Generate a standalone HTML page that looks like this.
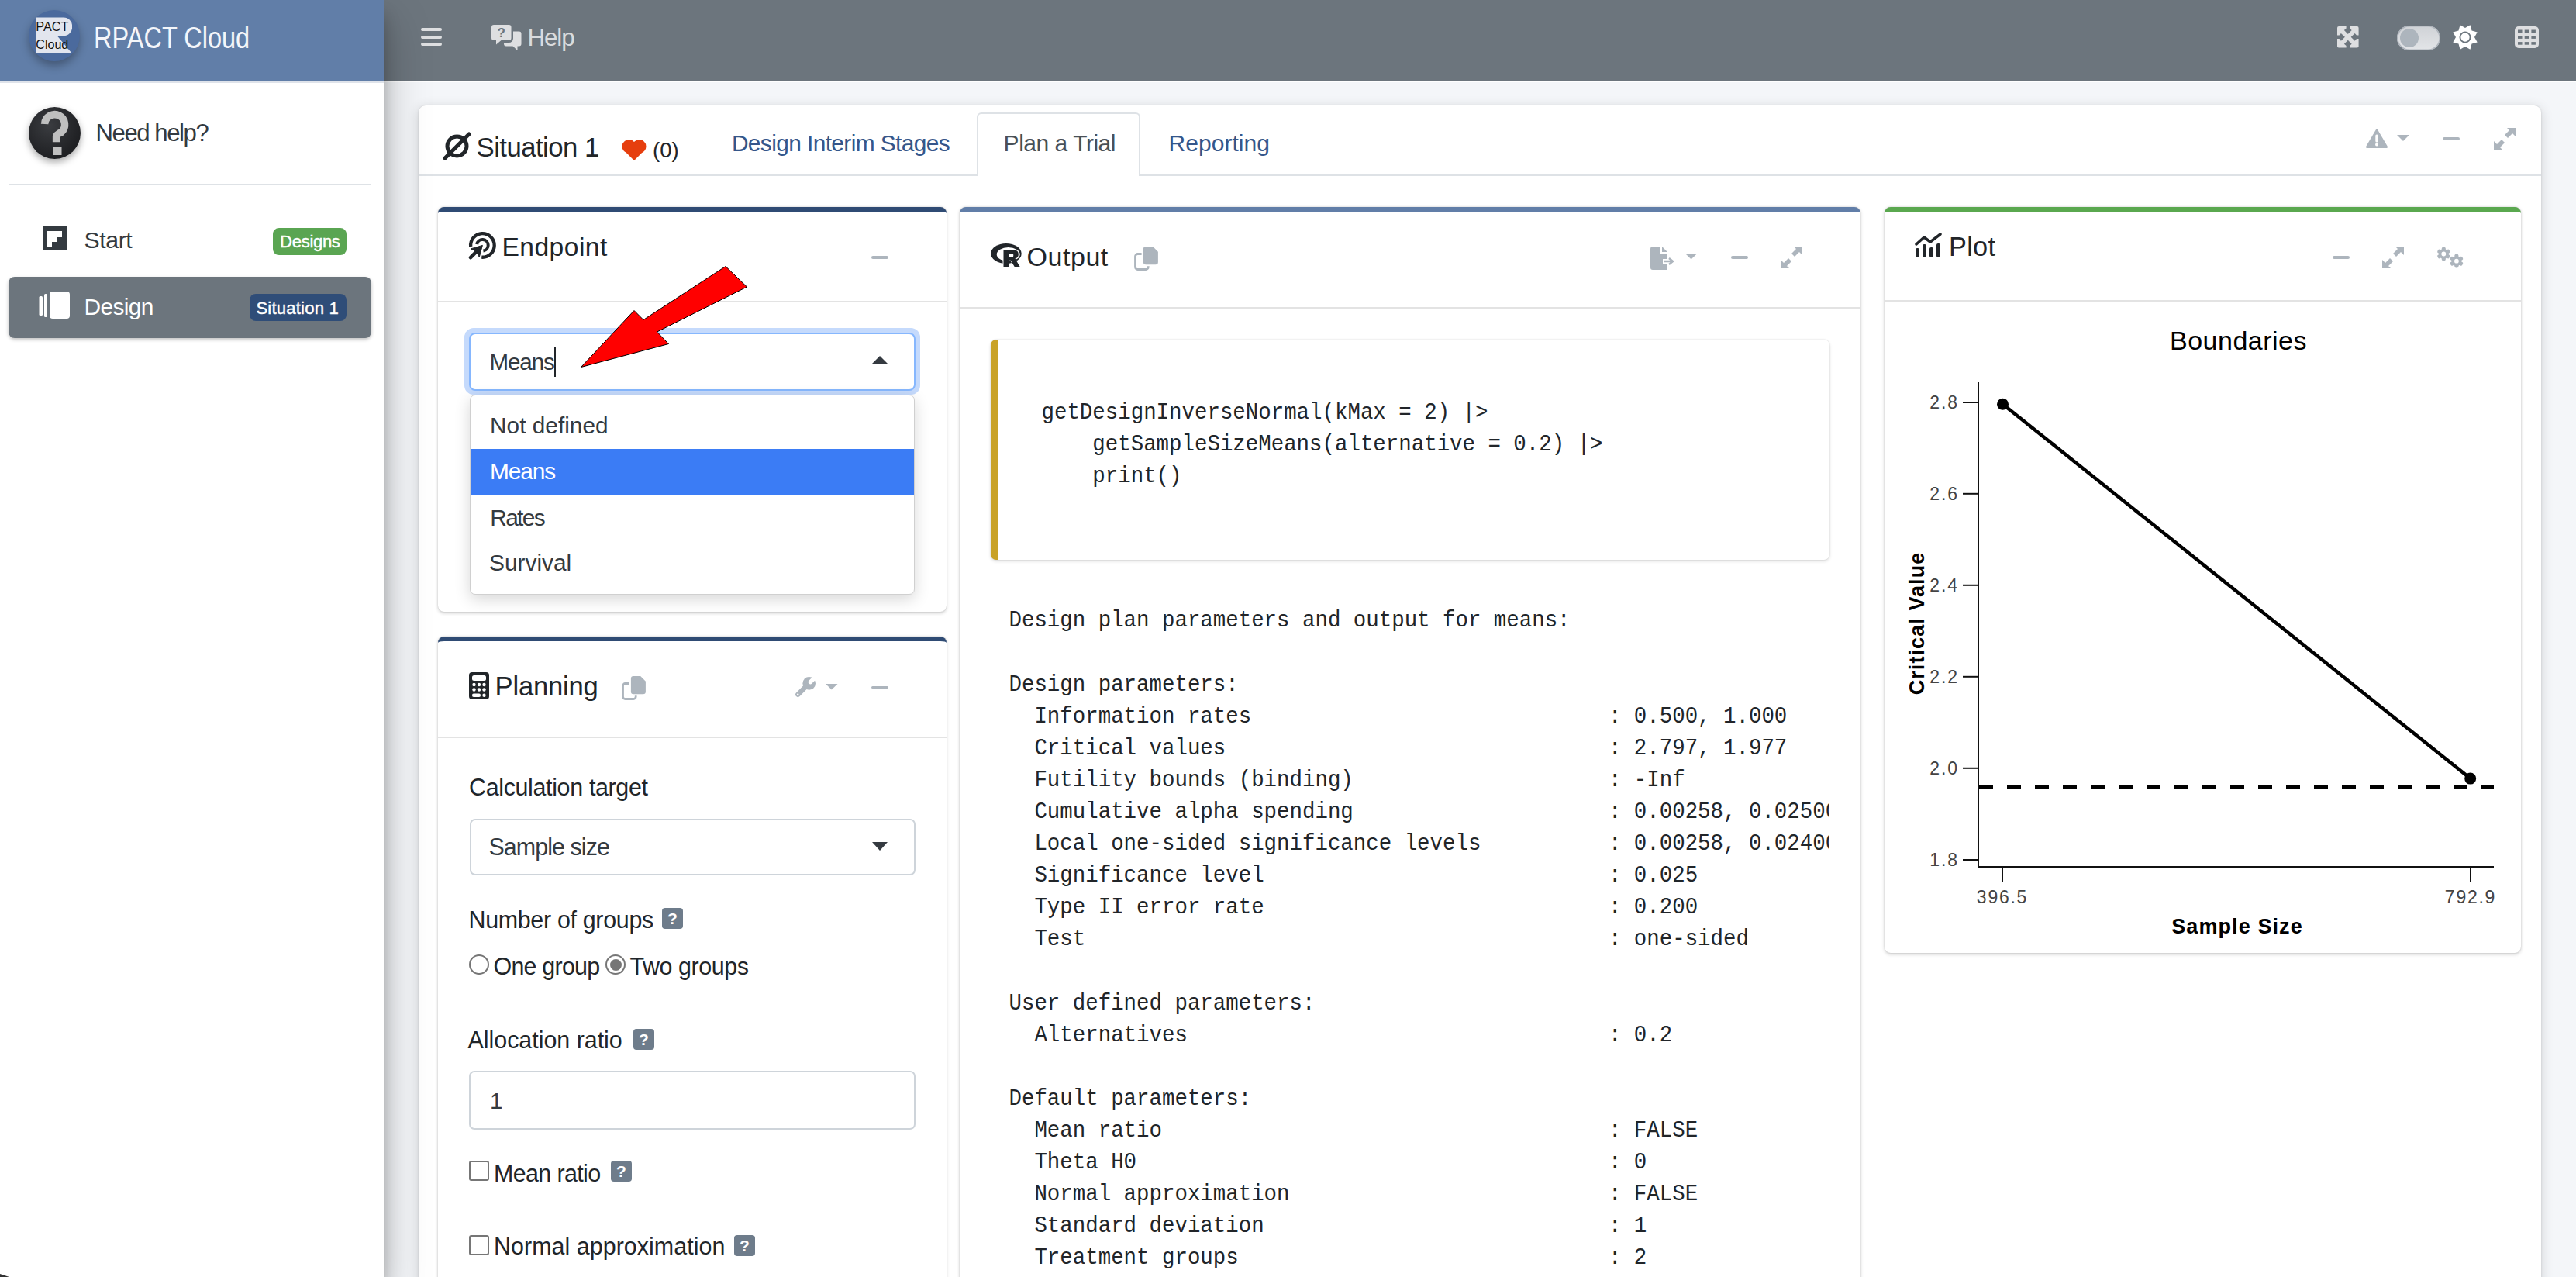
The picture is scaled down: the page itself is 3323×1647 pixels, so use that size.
<!DOCTYPE html>
<html><head><meta charset="utf-8"><style>
html,body{margin:0;padding:0;}
body{width:3323px;height:1647px;overflow:hidden;position:relative;background:#f4f6f9;font-family:'Liberation Sans', sans-serif;}
</style></head><body>
<div style="position:absolute;left:495px;top:0px;width:2828px;height:104px;background:#6c757d;"></div>
<div style="position:absolute;left:495px;top:104px;width:2828px;height:2px;background:#ffffff;"></div>
<div style="position:absolute;left:543px;top:36px;width:27px;height:4px;background:#dedfe1;border-radius:2px;"></div>
<div style="position:absolute;left:543px;top:46px;width:27px;height:4px;background:#dedfe1;border-radius:2px;"></div>
<div style="position:absolute;left:543px;top:55px;width:27px;height:4px;background:#dedfe1;border-radius:2px;"></div>
<svg style="position:absolute;left:634px;top:31px;" width="40" height="33" viewBox="0 0 40 33"><path d="M3 1h19.5a3 3 0 0 1 3 3v14a3 3 0 0 1-3 3H12.5l-6.5 5.5v-5.5H3a3 3 0 0 1-3-3V4a3 3 0 0 1 3-3z" fill="#dedfe1"/>
<path d="M28 9.5h7.5a3 3 0 0 1 3 3v13a3 3 0 0 1-3 3h-2v5.5l-6-5.5h-8.5a3 3 0 0 1-3-3v-1.5h6.5a5.5 5.5 0 0 0 5.5-5.5z" fill="#dedfe1"/>
<text x="12.7" y="17.2" font-family="Liberation Sans" font-weight="700" font-size="17" fill="#6c757d" text-anchor="middle">?</text></svg>
<div style="position:absolute;left:680.5px;top:32.8px;font-family:'Liberation Sans', sans-serif;font-size:31.30px;line-height:1;font-weight:400;letter-spacing:-1.07px;color:#d9dbde;white-space:pre;">Help</div>
<svg style="position:absolute;left:3015px;top:34px;" width="28" height="28" viewBox="0 0 28 28"><rect x="0" y="0" width="27.6" height="27.6" rx="2" fill="#dedfe1"/><polygon points="11.60,-1.00 11.60,2.60 8.90,4.90 13.80,9.90 18.70,4.90 16.00,2.60 16.00,-1.00" fill="#6c757d"/><polygon points="11.60,28.60 11.60,25.00 8.90,22.70 13.80,17.70 18.70,22.70 16.00,25.00 16.00,28.60" fill="#6c757d"/><polygon points="-1.00,11.60 2.60,11.60 4.90,8.90 9.90,13.80 4.90,18.70 2.60,16.00 -1.00,16.00" fill="#6c757d"/><polygon points="28.60,11.60 25.00,11.60 22.70,8.90 17.70,13.80 22.70,18.70 25.00,16.00 28.60,16.00" fill="#6c757d"/></svg>
<div style="position:absolute;left:3092px;top:33px;width:56px;height:32px;background:linear-gradient(#cfd2d6,#e3e5e8);border-radius:16px;box-shadow:inset 0 0 0 1.5px #aeb4bc;"></div>
<div style="position:absolute;left:3096px;top:37px;width:24px;height:24px;background:#adb5bd;border-radius:50%;"></div>
<svg style="position:absolute;left:3161.7px;top:29.6px;" width="36" height="36" viewBox="0 0 36 36"><polygon points="24.51,2.29 26.49,9.51 33.71,11.49 30.00,18.00 33.71,24.51 26.49,26.49 24.51,33.71 18.00,30.00 11.49,33.71 9.51,26.49 2.29,24.51 6.00,18.00 2.29,11.49 9.51,9.51 11.49,2.29 18.00,6.00" fill="#ffffff"/><circle cx="18" cy="18" r="6.6" fill="none" stroke="#6c757d" stroke-width="1.9"/></svg>
<svg style="position:absolute;left:3244px;top:34px;" width="31" height="28" viewBox="0 0 31 28"><rect x="0" y="0" width="31" height="28" rx="5" fill="#dedfe1"/><rect x="4.0" y="4.5" width="5.5" height="3.6" fill="#6c757d"/><rect x="12.7" y="4.5" width="5.5" height="3.6" fill="#6c757d"/><rect x="21.4" y="4.5" width="5.5" height="3.6" fill="#6c757d"/><rect x="4.0" y="12.3" width="5.5" height="3.6" fill="#6c757d"/><rect x="12.7" y="12.3" width="5.5" height="3.6" fill="#6c757d"/><rect x="21.4" y="12.3" width="5.5" height="3.6" fill="#6c757d"/><rect x="4.0" y="20.1" width="5.5" height="3.6" fill="#6c757d"/><rect x="12.7" y="20.1" width="5.5" height="3.6" fill="#6c757d"/><rect x="21.4" y="20.1" width="5.5" height="3.6" fill="#6c757d"/></svg>
<div style="position:absolute;left:0;top:0;width:495px;height:1647px;background:#fff;box-shadow:0 28px 56px rgba(0,0,0,.25),0 20px 20px rgba(0,0,0,.22);z-index:1"></div>
<div style="position:absolute;left:0;top:0;width:495px;height:1647px;z-index:2">
<div style="position:absolute;left:0px;top:0px;width:495px;height:105px;background:#617ea8;"></div>
<div style="position:absolute;left:0px;top:105px;width:495px;height:2px;background:#dfe3ea;"></div>
<div style="position:absolute;left:37px;top:13px;width:66px;height:66px;border-radius:50%;background:#4b6a9d;box-shadow:0 6px 12px rgba(0,0,0,.3)"></div>
<svg style="position:absolute;left:46px;top:22px;" width="47" height="47" viewBox="0 0 47 47"><path d="M0.6 0.6h35.5a11 11 0 0 1 11 11v1.5a11 11 0 0 1-11 11h-8.5l19.3 22.9H0.6z" fill="#e2e5ee"/>
<text x="0.3" y="17.9" font-family="Liberation Sans" font-size="16.4" fill="#111" textLength="42" lengthAdjust="spacingAndGlyphs">PACT</text>
<text x="0.3" y="40.9" font-family="Liberation Sans" font-size="16.4" fill="#111" textLength="42" lengthAdjust="spacingAndGlyphs">Cloud</text></svg>
<div style="position:absolute;left:121.0px;top:28.9px;font-family:'Liberation Sans', sans-serif;font-size:39.70px;line-height:1;font-weight:400;letter-spacing:0.00px;color:#f4f6fa;white-space:pre;transform:scaleX(0.819);transform-origin:0 0;">RPACT Cloud</div>
<div style="position:absolute;left:37px;top:138px;width:67px;height:67px;border-radius:50%;background:radial-gradient(circle at 40% 35%,#3a3c40,#1f2023 70%);box-shadow:0 4px 10px rgba(0,0,0,.35)"></div>
<svg style="position:absolute;left:37px;top:138px;" width="67" height="67" viewBox="0 0 67 67"><path d="M20.6 22 A13 13 0 1 1 42 32.6 Q35.6 35.5 35.6 38.5 V45.2" fill="none" stroke="#bfbfbf" stroke-width="9.5"/>
<rect x="32" y="51.5" width="10.5" height="10.5" fill="#bfbfbf"/></svg>
<div style="position:absolute;left:123.5px;top:155.5px;font-family:'Liberation Sans', sans-serif;font-size:31.16px;line-height:1;font-weight:400;letter-spacing:-1.46px;color:#343a40;white-space:pre;">Need help?</div>
<div style="position:absolute;left:11px;top:237px;width:468px;height:2px;background:#dee2e6;"></div>
<svg style="position:absolute;left:55px;top:292px;" width="31" height="31" viewBox="0 0 31 31"><path d="M0 0h31v31H0z" fill="#343a40"/><path d="M6 6h19v8h-7v6h-6v6H6z" fill="#fff"/></svg>
<div style="position:absolute;left:108.5px;top:295.3px;font-family:'Liberation Sans', sans-serif;font-size:30.29px;line-height:1;font-weight:400;letter-spacing:-0.43px;color:#343a40;white-space:pre;">Start</div>
<div style="position:absolute;left:352px;top:294px;width:95px;height:35px;background:#5aa552;border-radius:8px;"></div>
<div style="position:absolute;left:361.1px;top:301.1px;font-family:'Liberation Sans', sans-serif;font-size:22.17px;line-height:1;font-weight:400;letter-spacing:-0.37px;color:#fff;white-space:pre;-webkit-text-stroke:0.4px #fff;">Designs</div>
<div style="position:absolute;left:11px;top:357px;width:468px;height:79px;background:#6c757d;border-radius:8px;box-shadow:0 2px 4px rgba(0,0,0,.25);"></div>
<svg style="position:absolute;left:50px;top:376px;" width="41" height="36" viewBox="0 0 41 36"><rect x="0.5" y="6" width="4.5" height="25" rx="1.5" fill="#fff"/><rect x="7" y="3" width="4" height="30" rx="1.5" fill="#fff"/><rect x="14" y="0" width="26" height="35" rx="4" fill="#fff"/></svg>
<div style="position:absolute;left:108.5px;top:381.2px;font-family:'Liberation Sans', sans-serif;font-size:29.86px;line-height:1;font-weight:400;letter-spacing:-0.64px;color:#fff;white-space:pre;">Design</div>
<div style="position:absolute;left:322px;top:379px;width:125px;height:35px;background:#2f4d78;border-radius:8px;"></div>
<div style="position:absolute;left:330.4px;top:386.8px;font-family:'Liberation Sans', sans-serif;font-size:22.17px;line-height:1;font-weight:400;letter-spacing:0.17px;color:#fff;white-space:pre;-webkit-text-stroke:0.4px #fff;">Situation 1</div>
</div>
<div style="position:absolute;left:540px;top:136px;width:2738px;height:1600px;background:#fff;border-radius:9px;box-shadow:0 0 2px rgba(0,0,0,.15),0 3px 16px rgba(0,0,0,.16)"></div>
<div style="position:absolute;left:540px;top:225px;width:2738px;height:2px;background:#dee2e6;"></div>
<svg style="position:absolute;left:571px;top:170px;" width="37" height="37" viewBox="0 0 37 37"><circle cx="18.5" cy="18.5" r="12.5" fill="none" stroke="#212529" stroke-width="5"/><line x1="3" y1="34" x2="34" y2="3" stroke="#212529" stroke-width="5" stroke-linecap="round"/></svg>
<div style="position:absolute;left:614.5px;top:172.6px;font-family:'Liberation Sans', sans-serif;font-size:34.78px;line-height:1;font-weight:400;letter-spacing:-0.55px;color:#212529;white-space:pre;">Situation 1</div>
<svg style="position:absolute;left:802px;top:179px;" width="32" height="28" viewBox="0 0 32 28"><path d="M16 28 L3 15 A8 8 0 0 1 16 4 A8 8 0 0 1 29 15 Z" fill="#e63e0e"/><circle cx="9" cy="10" r="8.5" fill="#e63e0e"/><circle cx="23" cy="10" r="8.5" fill="#e63e0e"/></svg>
<div style="position:absolute;left:842.0px;top:179.6px;font-family:'Liberation Sans', sans-serif;font-size:27.50px;line-height:1;font-weight:400;letter-spacing:0.00px;color:#212529;white-space:pre;">(0)</div>
<div style="position:absolute;left:1260px;top:145px;width:211px;height:82px;background:#fff;border:2px solid #dee2e6;border-bottom:none;border-radius:6px 6px 0 0;box-sizing:border-box"></div>
<div style="position:absolute;left:943.9px;top:170.4px;font-family:'Liberation Sans', sans-serif;font-size:29.86px;line-height:1;font-weight:400;letter-spacing:-0.60px;color:#35568a;white-space:pre;">Design Interim Stages</div>
<div style="position:absolute;left:1294.6px;top:170.2px;font-family:'Liberation Sans', sans-serif;font-size:30.00px;line-height:1;font-weight:400;letter-spacing:-0.47px;color:#495057;white-space:pre;">Plan a Trial</div>
<div style="position:absolute;left:1507.5px;top:170.2px;font-family:'Liberation Sans', sans-serif;font-size:30.00px;line-height:1;font-weight:400;letter-spacing:0.05px;color:#35568a;white-space:pre;">Reporting</div>
<svg style="position:absolute;left:3052px;top:166px;" width="28" height="25" viewBox="0 0 28 25"><path d="M14 1 L27 23 Q27.5 24.5 26 24.5 L2 24.5 Q0.5 24.5 1 23 Z" fill="#adb5bd" stroke="#adb5bd" stroke-width="1.5" stroke-linejoin="round"/><rect x="12.3" y="7.5" width="3.4" height="10" rx="1.5" fill="#fff"/><circle cx="14" cy="20.5" r="2" fill="#fff"/></svg>
<svg style="position:absolute;left:3092px;top:174px;" width="16" height="8" viewBox="0 0 16 8"><path d="M0 0h16L8 8z" fill="#adb5bd"/></svg>
<div style="position:absolute;left:3151px;top:176.5px;width:22px;height:4px;background:#adb5bd;border-radius:2px;"></div>
<svg style="position:absolute;left:3217px;top:165px;" width="28" height="28" viewBox="0 0 28 28"><path d="M17 0h11v11l-4-4-6 6-4-4 6-6z M11 28H0V17l4 4 6-6 4 4-6 6z" fill="#adb5bd"/></svg>
<div style="position:absolute;left:565px;top:267px;width:656px;height:522px;background:#fff;border-radius:8px;border-top:6px solid #2f4b74;box-sizing:border-box;box-shadow:0 0 1.5px rgba(0,0,0,.2),0 1.5px 4px rgba(0,0,0,.18)"></div>
<div style="position:absolute;left:565px;top:821px;width:656px;height:900px;background:#fff;border-radius:8px;border-top:6px solid #2f4b74;box-sizing:border-box;box-shadow:0 0 1.5px rgba(0,0,0,.2),0 1.5px 4px rgba(0,0,0,.18)"></div>
<div style="position:absolute;left:1238px;top:267px;width:1162px;height:1500px;background:#fff;border-radius:8px;border-top:6px solid #617ea8;box-sizing:border-box;box-shadow:0 0 1.5px rgba(0,0,0,.2),0 1.5px 4px rgba(0,0,0,.18)"></div>
<div style="position:absolute;left:2431px;top:267px;width:821px;height:962px;background:#fff;border-radius:8px;border-top:6px solid #5aa84f;box-sizing:border-box;box-shadow:0 0 1.5px rgba(0,0,0,.2),0 1.5px 4px rgba(0,0,0,.18)"></div>
<div style="position:absolute;left:565px;top:388px;width:656px;height:2px;background:#e3e3e3;"></div>
<div style="position:absolute;left:565px;top:950px;width:656px;height:2px;background:#e3e3e3;"></div>
<div style="position:absolute;left:1238px;top:396px;width:1162px;height:2px;background:#e3e3e3;"></div>
<div style="position:absolute;left:2431px;top:387px;width:821px;height:2px;background:#e3e3e3;"></div>
<svg style="position:absolute;left:598px;top:292px;" width="50" height="48" viewBox="0 0 50 48"><path d="M9.2 26 A15.3 15.3 0 1 1 23.3 39.7" fill="none" stroke="#212529" stroke-width="4.3"/>
<path d="M17.2 23.1 A7.3 7.3 0 1 1 25.4 31.6" fill="none" stroke="#212529" stroke-width="4"/>
<path d="M9 40.2 L17.5 31.7" stroke="#212529" stroke-width="4.6" stroke-linecap="round"/>
<path d="M24.4 24.4 L9.4 28.9 L14.5 31.5 L17.5 34.5 L20.3 39.5 Z" fill="#212529" stroke="#212529" stroke-width="1" stroke-linejoin="round"/></svg>
<div style="position:absolute;left:647.5px;top:301.6px;font-family:'Liberation Sans', sans-serif;font-size:33.62px;line-height:1;font-weight:400;letter-spacing:0.44px;color:#212529;white-space:pre;">Endpoint</div>
<div style="position:absolute;left:1124px;top:330px;width:22px;height:3.5px;background:#adb5bd;border-radius:2px;"></div>
<div style="position:absolute;left:599px;top:423px;width:588px;height:86px;border-radius:12px;background:#c5dafc"></div>
<div style="position:absolute;left:605px;top:429px;width:576px;height:75px;border-radius:8px;background:#fff;border:2px solid #86b7fe;box-sizing:border-box"></div>
<div style="position:absolute;left:631.5px;top:451.9px;font-family:'Liberation Sans', sans-serif;font-size:29.57px;line-height:1;font-weight:400;letter-spacing:-1.12px;color:#343a40;white-space:pre;">Means</div>
<div style="position:absolute;left:715px;top:447px;width:2px;height:39px;background:#212529;"></div>
<svg style="position:absolute;left:1125px;top:459px;" width="20" height="10" viewBox="0 0 20 10"><path d="M0 10h20L10 0z" fill="#343a40"/></svg>
<div style="position:absolute;left:606px;top:508.5px;width:574px;height:258.5px;background:#fff;border:1.5px solid #d0d0d0;border-radius:7px;box-sizing:border-box;box-shadow:0 6px 20px rgba(0,0,0,.16)"></div>
<div style="position:absolute;left:607px;top:579px;width:572px;height:59px;background:#3b7cf5;"></div>
<div style="position:absolute;left:632.1px;top:534.3px;font-family:'Liberation Sans', sans-serif;font-size:29.71px;line-height:1;font-weight:400;letter-spacing:0.05px;color:#343a40;white-space:pre;">Not defined</div>
<div style="position:absolute;left:632.0px;top:593.3px;font-family:'Liberation Sans', sans-serif;font-size:29.86px;line-height:1;font-weight:400;letter-spacing:-1.12px;color:#ffffff;white-space:pre;">Means</div>
<div style="position:absolute;left:632.2px;top:652.5px;font-family:'Liberation Sans', sans-serif;font-size:29.86px;line-height:1;font-weight:400;letter-spacing:-1.62px;color:#343a40;white-space:pre;">Rates</div>
<div style="position:absolute;left:631.0px;top:711.2px;font-family:'Liberation Sans', sans-serif;font-size:29.86px;line-height:1;font-weight:400;letter-spacing:0.00px;color:#343a40;white-space:pre;">Survival</div>
<svg style="position:absolute;left:605px;top:867px;" width="27" height="36" viewBox="0 0 27 36"><rect x="0" y="0" width="26" height="35" rx="4" fill="#212529"/><rect x="4" y="4" width="18" height="7" rx="2.5" fill="#fff"/><circle cx="6.5" cy="16.0" r="2.2" fill="#fff"/><circle cx="13.0" cy="16.0" r="2.2" fill="#fff"/><circle cx="19.5" cy="16.0" r="2.2" fill="#fff"/><circle cx="6.5" cy="22.5" r="2.2" fill="#fff"/><circle cx="13.0" cy="22.5" r="2.2" fill="#fff"/><circle cx="19.5" cy="22.5" r="2.2" fill="#fff"/><rect x="4" y="27.5" width="11" height="4.5" rx="2" fill="#fff"/><circle cx="19.5" cy="29.7" r="2.2" fill="#fff"/></svg>
<div style="position:absolute;left:638.5px;top:867.9px;font-family:'Liberation Sans', sans-serif;font-size:34.64px;line-height:1;font-weight:400;letter-spacing:-0.20px;color:#212529;white-space:pre;">Planning</div>
<svg style="position:absolute;left:802px;top:872px;" width="32" height="32" viewBox="0 0 32 32"><path d="M9.6 9.5 H4.5 a3 3 0 0 0 -3 3 V26.5 a3 3 0 0 0 3 3 H15.2 a3 3 0 0 0 3-3 V25.3" fill="none" stroke="#adb5bd" stroke-width="2.8"/><path d="M11.9 3.4 a3.3 3.3 0 0 1 3.3-3.3 H24.2 L30.9 6.8 V19.9 a3.3 3.3 0 0 1 -3.3 3.3 H15.2 a3.3 3.3 0 0 1 -3.3-3.3 Z" fill="#adb5bd"/></svg>
<svg style="position:absolute;left:1015px;top:865px;" width="45" height="40" viewBox="0 0 45 40"><path d="M27 18 L14.3 30.8" stroke="#adb5bd" stroke-width="6.4" stroke-linecap="round"/><circle cx="28.7" cy="16.4" r="8.3" fill="#adb5bd"/><path d="M30.4 14.6 L40 5" stroke="#fff" stroke-width="5.4" stroke-linecap="round"/><circle cx="14.2" cy="30.9" r="1.3" fill="#fff"/></svg>
<svg style="position:absolute;left:1065.2px;top:882.3px;" width="15.5" height="7.5" viewBox="0 0 15.5 7.5"><path d="M0 0h15.5L7.75 7.5z" fill="#adb5bd"/></svg>
<div style="position:absolute;left:1124px;top:884.5px;width:22px;height:3.5px;background:#adb5bd;border-radius:2px;"></div>
<div style="position:absolute;left:605.0px;top:1000.2px;font-family:'Liberation Sans', sans-serif;font-size:30.43px;line-height:1;font-weight:400;letter-spacing:-0.34px;color:#212529;white-space:pre;">Calculation target</div>
<div style="position:absolute;left:606px;top:1056px;width:575px;height:73px;border:2px solid #ced4da;border-radius:7px;box-sizing:border-box"></div>
<div style="position:absolute;left:630.5px;top:1077.1px;font-family:'Liberation Sans', sans-serif;font-size:30.43px;line-height:1;font-weight:400;letter-spacing:-0.93px;color:#343a40;white-space:pre;">Sample size</div>
<svg style="position:absolute;left:1125px;top:1086px;" width="20" height="11" viewBox="0 0 20 11"><path d="M0 0h20L10 11z" fill="#343a40"/></svg>
<div style="position:absolute;left:604.5px;top:1170.6px;font-family:'Liberation Sans', sans-serif;font-size:30.43px;line-height:1;font-weight:400;letter-spacing:-0.32px;color:#212529;white-space:pre;">Number of groups</div>
<div style="position:absolute;left:854px;top:1171px;width:27px;height:27px;background:#6e7c8b;border-radius:4px;"></div>
<div style="position:absolute;left:861.0px;top:1174.2px;font-family:'Liberation Sans', sans-serif;font-size:21.00px;line-height:1;font-weight:700;letter-spacing:0.00px;color:#fff;white-space:pre;">?</div>
<div style="position:absolute;left:605px;top:1231px;width:26px;height:26px;border:2px solid #767676;border-radius:50%;box-sizing:border-box"></div>
<div style="position:absolute;left:636.5px;top:1230.8px;font-family:'Liberation Sans', sans-serif;font-size:30.43px;line-height:1;font-weight:400;letter-spacing:-0.77px;color:#212529;white-space:pre;">One group</div>
<div style="position:absolute;left:781px;top:1231px;width:26px;height:26px;border:2px solid #767676;border-radius:50%;box-sizing:border-box"></div>
<div style="position:absolute;left:786.5px;top:1236.5px;width:15px;height:15px;background:#767676;border-radius:50%"></div>
<div style="position:absolute;left:812.5px;top:1230.8px;font-family:'Liberation Sans', sans-serif;font-size:30.43px;line-height:1;font-weight:400;letter-spacing:-0.42px;color:#212529;white-space:pre;">Two groups</div>
<div style="position:absolute;left:603.5px;top:1326.4px;font-family:'Liberation Sans', sans-serif;font-size:30.43px;line-height:1;font-weight:400;letter-spacing:-0.02px;color:#212529;white-space:pre;">Allocation ratio</div>
<div style="position:absolute;left:817px;top:1327px;width:27px;height:27px;background:#6e7c8b;border-radius:4px;"></div>
<div style="position:absolute;left:824.0px;top:1330.2px;font-family:'Liberation Sans', sans-serif;font-size:21.00px;line-height:1;font-weight:700;letter-spacing:0.00px;color:#fff;white-space:pre;">?</div>
<div style="position:absolute;left:605px;top:1381px;width:576px;height:76px;border:2px solid #ced4da;border-radius:7px;box-sizing:border-box"></div>
<div style="position:absolute;left:632.0px;top:1405.2px;font-family:'Liberation Sans', sans-serif;font-size:29.50px;line-height:1;font-weight:400;letter-spacing:0.00px;color:#343a40;white-space:pre;">1</div>
<div style="position:absolute;left:605px;top:1497px;width:26px;height:26px;border:2px solid #767676;border-radius:3px;box-sizing:border-box"></div>
<div style="position:absolute;left:637.0px;top:1497.9px;font-family:'Liberation Sans', sans-serif;font-size:30.43px;line-height:1;font-weight:400;letter-spacing:-0.62px;color:#212529;white-space:pre;">Mean ratio</div>
<div style="position:absolute;left:788px;top:1497px;width:27px;height:27px;background:#6e7c8b;border-radius:4px;"></div>
<div style="position:absolute;left:795.0px;top:1500.2px;font-family:'Liberation Sans', sans-serif;font-size:21.00px;line-height:1;font-weight:700;letter-spacing:0.00px;color:#fff;white-space:pre;">?</div>
<div style="position:absolute;left:605px;top:1592.5px;width:26px;height:26px;border:2px solid #767676;border-radius:3px;box-sizing:border-box"></div>
<div style="position:absolute;left:637.0px;top:1592.4px;font-family:'Liberation Sans', sans-serif;font-size:30.43px;line-height:1;font-weight:400;letter-spacing:0.04px;color:#212529;white-space:pre;">Normal approximation</div>
<div style="position:absolute;left:947px;top:1593px;width:27px;height:27px;background:#6e7c8b;border-radius:4px;"></div>
<div style="position:absolute;left:954.0px;top:1596.2px;font-family:'Liberation Sans', sans-serif;font-size:21.00px;line-height:1;font-weight:700;letter-spacing:0.00px;color:#fff;white-space:pre;">?</div>
<svg style="position:absolute;left:1272px;top:306px;" width="54" height="46" viewBox="0 0 54 46"><ellipse cx="25.9" cy="21" rx="19.8" ry="13" fill="#212529"/>
<ellipse cx="28.7" cy="22" rx="15" ry="9" fill="#fff"/>
<path fill-rule="evenodd" d="M21.5 15.8 H36.5 Q42.8 15.8 42.8 22 Q42.8 26.8 38.2 28 L44.6 39.2 H36.8 L31.4 30.2 H29.5 V39.2 H21.5 Z M29.5 20.8 H34.2 Q35.8 20.8 35.8 23.2 Q35.8 25.6 34.2 25.6 H29.5 Z" fill="#fff"/>
<path fill-rule="evenodd" d="M22.5 16.8 H36.5 Q41.8 16.8 41.8 22 Q41.8 26.3 37.5 27.4 L44.1 38.7 H37.1 L31.8 29.7 H29 V38.7 H22.5 Z M29 21 H34.2 Q35.3 21 35.3 23.3 Q35.3 25.6 34.2 25.6 H29 Z" fill="#212529"/></svg>
<div style="position:absolute;left:1324.5px;top:314.2px;font-family:'Liberation Sans', sans-serif;font-size:34.06px;line-height:1;font-weight:400;letter-spacing:0.52px;color:#212529;white-space:pre;">Output</div>
<svg style="position:absolute;left:1463px;top:318px;" width="32" height="32" viewBox="0 0 32 32"><path d="M9.6 9.5 H4.5 a3 3 0 0 0 -3 3 V26.5 a3 3 0 0 0 3 3 H15.2 a3 3 0 0 0 3-3 V25.3" fill="none" stroke="#adb5bd" stroke-width="2.8"/><path d="M11.9 3.4 a3.3 3.3 0 0 1 3.3-3.3 H24.2 L30.9 6.8 V19.9 a3.3 3.3 0 0 1 -3.3 3.3 H15.2 a3.3 3.3 0 0 1 -3.3-3.3 Z" fill="#adb5bd"/></svg>
<svg style="position:absolute;left:2129px;top:318px;" width="33" height="30" viewBox="0 0 33 30"><path d="M0 3a3 3 0 0 1 3-3h10v9h9v7h-6v6h6v8H3a3 3 0 0 1-3-3z M15 0l7 7h-7z" fill="#adb5bd"/><path d="M17 19h10M24 15l5 4-5 4" fill="none" stroke="#adb5bd" stroke-width="2.4"/></svg>
<svg style="position:absolute;left:2174.3px;top:327.1px;" width="15.2" height="7.4" viewBox="0 0 15.2 7.4"><path d="M0 0h15.2L7.6 7.4z" fill="#adb5bd"/></svg>
<div style="position:absolute;left:2233px;top:330px;width:22px;height:3.5px;background:#adb5bd;border-radius:2px;"></div>
<svg style="position:absolute;left:2297px;top:318px;" width="28" height="28" viewBox="0 0 28 28"><path d="M17 0h11v11l-4-4-6 6-4-4 6-6z M11 28H0V17l4 4 6-6 4 4-6 6z" fill="#adb5bd"/></svg>
<div style="position:absolute;left:1278px;top:438px;width:1082px;height:284px;background:#fff;border-radius:7px;border-left:10px solid #c9a227;box-sizing:border-box;box-shadow:0 0 2px rgba(0,0,0,.15),0 2px 4px rgba(0,0,0,.12)"></div>
<div style="position:absolute;left:1343.5px;top:519.2px;font-family:'Liberation Mono', monospace;font-size:27.43px;line-height:1;font-weight:400;letter-spacing:0.00px;color:#212529;white-space:pre;transform:scaleY(1.1);transform-origin:0 20.85px;">getDesignInverseNormal(kMax = 2) |&gt;</div>
<div style="position:absolute;left:1343.5px;top:560.0px;font-family:'Liberation Mono', monospace;font-size:27.43px;line-height:1;font-weight:400;letter-spacing:0.00px;color:#212529;white-space:pre;transform:scaleY(1.1);transform-origin:0 20.85px;">    getSampleSizeMeans(alternative = 0.2) |&gt;</div>
<div style="position:absolute;left:1343.5px;top:600.9px;font-family:'Liberation Mono', monospace;font-size:27.43px;line-height:1;font-weight:400;letter-spacing:0.00px;color:#212529;white-space:pre;transform:scaleY(1.1);transform-origin:0 20.85px;">    print()</div>
<div style="position:absolute;left:1278px;top:760px;width:1082px;height:900px;overflow:hidden">
<div style="position:absolute;left:23.5px;top:27.3px;font-family:'Liberation Mono', monospace;font-size:27.43px;line-height:1;color:#212529;white-space:pre;transform:scaleY(1.1);transform-origin:0 20.85px">Design plan parameters and output for means:</div>
<div style="position:absolute;left:23.5px;top:109.5px;font-family:'Liberation Mono', monospace;font-size:27.43px;line-height:1;color:#212529;white-space:pre;transform:scaleY(1.1);transform-origin:0 20.85px">Design parameters:</div>
<div style="position:absolute;left:23.5px;top:150.6px;font-family:'Liberation Mono', monospace;font-size:27.43px;line-height:1;color:#212529;white-space:pre;transform:scaleY(1.1);transform-origin:0 20.85px">  Information rates                            : 0.500, 1.000</div>
<div style="position:absolute;left:23.5px;top:191.7px;font-family:'Liberation Mono', monospace;font-size:27.43px;line-height:1;color:#212529;white-space:pre;transform:scaleY(1.1);transform-origin:0 20.85px">  Critical values                              : 2.797, 1.977</div>
<div style="position:absolute;left:23.5px;top:232.8px;font-family:'Liberation Mono', monospace;font-size:27.43px;line-height:1;color:#212529;white-space:pre;transform:scaleY(1.1);transform-origin:0 20.85px">  Futility bounds (binding)                    : -Inf</div>
<div style="position:absolute;left:23.5px;top:273.9px;font-family:'Liberation Mono', monospace;font-size:27.43px;line-height:1;color:#212529;white-space:pre;transform:scaleY(1.1);transform-origin:0 20.85px">  Cumulative alpha spending                    : 0.00258, 0.02500</div>
<div style="position:absolute;left:23.5px;top:315.0px;font-family:'Liberation Mono', monospace;font-size:27.43px;line-height:1;color:#212529;white-space:pre;transform:scaleY(1.1);transform-origin:0 20.85px">  Local one-sided significance levels          : 0.00258, 0.02400</div>
<div style="position:absolute;left:23.5px;top:356.1px;font-family:'Liberation Mono', monospace;font-size:27.43px;line-height:1;color:#212529;white-space:pre;transform:scaleY(1.1);transform-origin:0 20.85px">  Significance level                           : 0.025</div>
<div style="position:absolute;left:23.5px;top:397.2px;font-family:'Liberation Mono', monospace;font-size:27.43px;line-height:1;color:#212529;white-space:pre;transform:scaleY(1.1);transform-origin:0 20.85px">  Type II error rate                           : 0.200</div>
<div style="position:absolute;left:23.5px;top:438.3px;font-family:'Liberation Mono', monospace;font-size:27.43px;line-height:1;color:#212529;white-space:pre;transform:scaleY(1.1);transform-origin:0 20.85px">  Test                                         : one-sided</div>
<div style="position:absolute;left:23.5px;top:520.5px;font-family:'Liberation Mono', monospace;font-size:27.43px;line-height:1;color:#212529;white-space:pre;transform:scaleY(1.1);transform-origin:0 20.85px">User defined parameters:</div>
<div style="position:absolute;left:23.5px;top:561.6px;font-family:'Liberation Mono', monospace;font-size:27.43px;line-height:1;color:#212529;white-space:pre;transform:scaleY(1.1);transform-origin:0 20.85px">  Alternatives                                 : 0.2</div>
<div style="position:absolute;left:23.5px;top:643.8px;font-family:'Liberation Mono', monospace;font-size:27.43px;line-height:1;color:#212529;white-space:pre;transform:scaleY(1.1);transform-origin:0 20.85px">Default parameters:</div>
<div style="position:absolute;left:23.5px;top:684.9px;font-family:'Liberation Mono', monospace;font-size:27.43px;line-height:1;color:#212529;white-space:pre;transform:scaleY(1.1);transform-origin:0 20.85px">  Mean ratio                                   : FALSE</div>
<div style="position:absolute;left:23.5px;top:726.0px;font-family:'Liberation Mono', monospace;font-size:27.43px;line-height:1;color:#212529;white-space:pre;transform:scaleY(1.1);transform-origin:0 20.85px">  Theta H0                                     : 0</div>
<div style="position:absolute;left:23.5px;top:767.1px;font-family:'Liberation Mono', monospace;font-size:27.43px;line-height:1;color:#212529;white-space:pre;transform:scaleY(1.1);transform-origin:0 20.85px">  Normal approximation                         : FALSE</div>
<div style="position:absolute;left:23.5px;top:808.2px;font-family:'Liberation Mono', monospace;font-size:27.43px;line-height:1;color:#212529;white-space:pre;transform:scaleY(1.1);transform-origin:0 20.85px">  Standard deviation                           : 1</div>
<div style="position:absolute;left:23.5px;top:849.3px;font-family:'Liberation Mono', monospace;font-size:27.43px;line-height:1;color:#212529;white-space:pre;transform:scaleY(1.1);transform-origin:0 20.85px">  Treatment groups                             : 2</div>
</div>
<svg style="position:absolute;left:2470px;top:301px;" width="36" height="32" viewBox="0 0 36 32"><path d="M2 14 L12 5 L20 11 L33 1" fill="none" stroke="#212529" stroke-width="3.5" stroke-linejoin="round" stroke-linecap="round"/><rect x="1" y="19" width="5" height="12" rx="2" fill="#212529"/><rect x="10" y="14" width="5" height="17" rx="2" fill="#212529"/><rect x="19" y="18" width="5" height="13" rx="2" fill="#212529"/><rect x="28" y="13" width="5" height="18" rx="2" fill="#212529"/></svg>
<div style="position:absolute;left:2514.0px;top:301.2px;font-family:'Liberation Sans', sans-serif;font-size:34.35px;line-height:1;font-weight:400;letter-spacing:0.27px;color:#212529;white-space:pre;">Plot</div>
<div style="position:absolute;left:3009px;top:330px;width:22px;height:3.5px;background:#adb5bd;border-radius:2px;"></div>
<svg style="position:absolute;left:3073px;top:318px;" width="28" height="28" viewBox="0 0 28 28"><path d="M17 0h11v11l-4-4-6 6-4-4 6-6z M11 28H0V17l4 4 6-6 4 4-6 6z" fill="#adb5bd"/></svg>
<svg style="position:absolute;left:3140px;top:315px;" width="40" height="32" viewBox="0 0 40 32"><circle cx="12.3" cy="12.5" r="6.4" fill="#adb5bd"/><rect x="9.8" y="3.8000000000000007" width="5" height="17.4" rx="1.8" fill="#adb5bd" transform="rotate(0 12.3 12.5)"/><rect x="9.8" y="3.8000000000000007" width="5" height="17.4" rx="1.8" fill="#adb5bd" transform="rotate(60 12.3 12.5)"/><rect x="9.8" y="3.8000000000000007" width="5" height="17.4" rx="1.8" fill="#adb5bd" transform="rotate(120 12.3 12.5)"/><circle cx="12.3" cy="12.5" r="2.9" fill="#fff"/><circle cx="28.9" cy="21.7" r="6.4" fill="#adb5bd"/><rect x="26.4" y="12.799999999999999" width="5" height="17.8" rx="1.8" fill="#adb5bd" transform="rotate(0 28.9 21.7)"/><rect x="26.4" y="12.799999999999999" width="5" height="17.8" rx="1.8" fill="#adb5bd" transform="rotate(60 28.9 21.7)"/><rect x="26.4" y="12.799999999999999" width="5" height="17.8" rx="1.8" fill="#adb5bd" transform="rotate(120 28.9 21.7)"/><circle cx="28.9" cy="21.7" r="2.9" fill="#fff"/></svg>
<div style="position:absolute;left:2799.0px;top:421.9px;font-family:'Liberation Sans', sans-serif;font-size:34.00px;line-height:1;font-weight:400;letter-spacing:0.50px;color:#000;white-space:pre;">Boundaries</div>
<svg style="position:absolute;left:0;top:0" width="3323" height="1647" viewBox="0 0 3323 1647"><g><line x1="2552" y1="493" x2="2552" y2="1119" stroke="#111" stroke-width="2"/><line x1="2551" y1="1118" x2="3217" y2="1118" stroke="#111" stroke-width="2"/><line x1="2532" y1="519" x2="2552" y2="519" stroke="#111" stroke-width="2"/><text x="2527" y="527" font-family="Liberation Sans" font-size="23" fill="#444" text-anchor="end" letter-spacing="1.9">2.8</text><line x1="2532" y1="636.8" x2="2552" y2="636.8" stroke="#111" stroke-width="2"/><text x="2527" y="644.8" font-family="Liberation Sans" font-size="23" fill="#444" text-anchor="end" letter-spacing="1.9">2.6</text><line x1="2532" y1="754.8" x2="2552" y2="754.8" stroke="#111" stroke-width="2"/><text x="2527" y="762.8" font-family="Liberation Sans" font-size="23" fill="#444" text-anchor="end" letter-spacing="1.9">2.4</text><line x1="2532" y1="872.8" x2="2552" y2="872.8" stroke="#111" stroke-width="2"/><text x="2527" y="880.8" font-family="Liberation Sans" font-size="23" fill="#444" text-anchor="end" letter-spacing="1.9">2.2</text><line x1="2532" y1="990.8" x2="2552" y2="990.8" stroke="#111" stroke-width="2"/><text x="2527" y="998.8" font-family="Liberation Sans" font-size="23" fill="#444" text-anchor="end" letter-spacing="1.9">2.0</text><line x1="2532" y1="1109" x2="2552" y2="1109" stroke="#111" stroke-width="2"/><text x="2527" y="1117" font-family="Liberation Sans" font-size="23" fill="#444" text-anchor="end" letter-spacing="1.9">1.8</text><line x1="2583" y1="1118" x2="2583" y2="1138" stroke="#111" stroke-width="2"/><text x="2583" y="1165" font-family="Liberation Sans" font-size="23" fill="#444" text-anchor="middle" letter-spacing="1.75">396.5</text><line x1="3187" y1="1118" x2="3187" y2="1138" stroke="#111" stroke-width="2"/><text x="3187" y="1165" font-family="Liberation Sans" font-size="23" fill="#444" text-anchor="middle" letter-spacing="1.75">792.9</text><line x1="2553" y1="1014.7" x2="3217" y2="1014.7" stroke="#000" stroke-width="4.5" stroke-dasharray="18 18"/><line x1="2583.5" y1="521.2" x2="3186.7" y2="1004.1" stroke="#000" stroke-width="4.5"/><circle cx="2583.5" cy="521.2" r="7.5" fill="#000"/><circle cx="3186.7" cy="1004.1" r="7.5" fill="#000"/><text x="2886" y="1204" font-family="Liberation Sans" font-weight="700" font-size="27" fill="#000" text-anchor="middle" letter-spacing="1.1">Sample Size</text><text transform="translate(2482 804) rotate(-90)" x="0" y="0" font-family="Liberation Sans" font-weight="700" font-size="27" fill="#000" text-anchor="middle" letter-spacing="1.08">Critical Value</text></g></svg>
<svg style="position:absolute;left:0;top:0;z-index:5" width="3323" height="1647" viewBox="0 0 3323 1647"><polygon points="749.5,473.5 818,400.5 830,412.5 936,343.5 963.5,370 847.5,428 862.5,443.5" fill="#ff0000" stroke="#000" stroke-width="1"/></svg>
<svg style="position:absolute;left:0;top:1630px;z-index:6" width="20" height="17"><path d="M0 13 L12 17 L0 17z" fill="#333"/></svg>
</body></html>
